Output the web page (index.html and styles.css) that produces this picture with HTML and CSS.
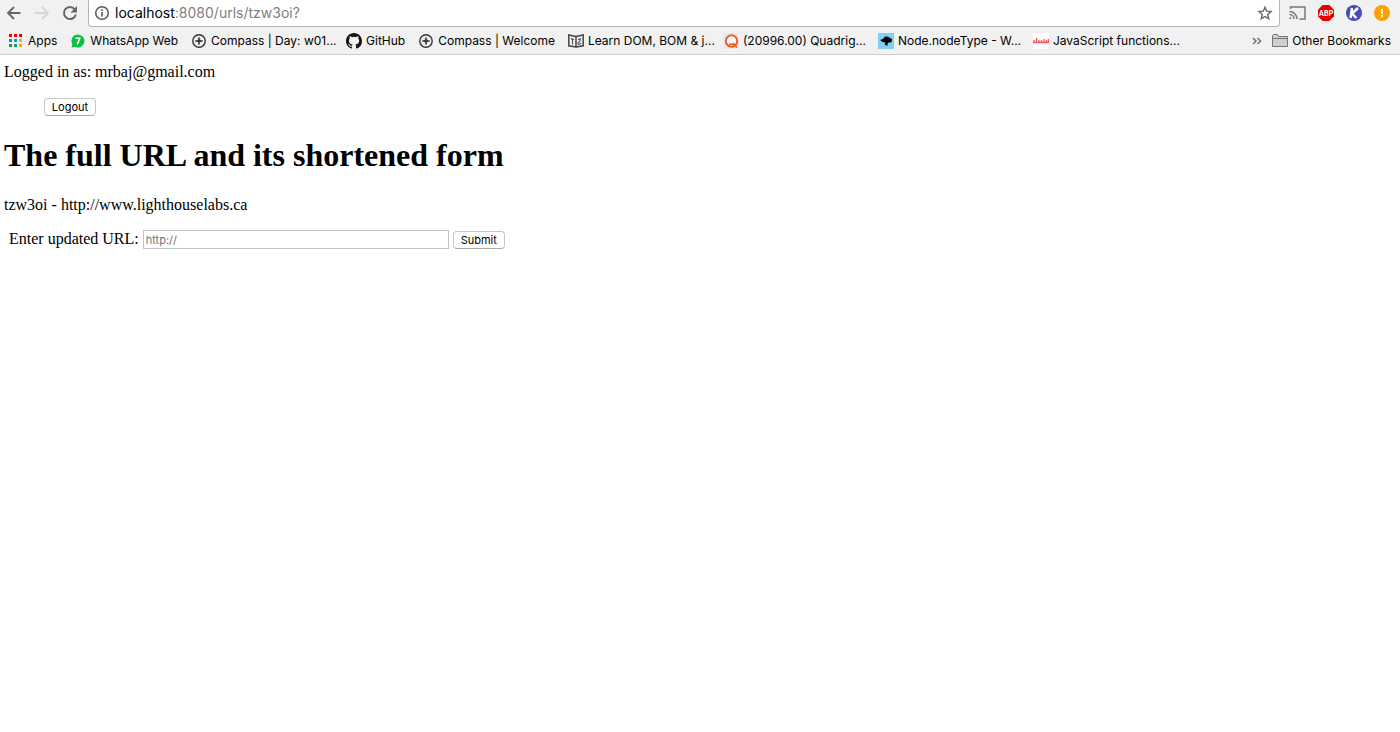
FILE: index.html
```
<!DOCTYPE html>
<html lang="en">
<head>
<meta charset="utf-8">
<title>TinyApp</title>
<link rel="stylesheet" href="styles.css">
</head>
<body>
<header class="browser">
  <div class="toolbar">
    <button class="tool" type="button" aria-label="Back"><svg width="16" height="16" viewBox="0 0 16 16" fill="none" stroke="#666" stroke-width="1.800"><path d="M14.500 8H2.500M8 2 2 8l6 6"/></svg></button>
    <button class="tool" type="button" aria-label="Forward"><svg width="16" height="16" viewBox="0 0 16 16" fill="none" stroke="#d6d6d6" stroke-width="1.800"><path d="M1 8h12.500M8 2l6 6-6 6"/></svg></button>
    <button class="tool" type="button" aria-label="Reload"><svg width="16" height="16" viewBox="0 0 16 16"><path d="M12.700 4.300A6 6 0 1 0 13.800 9.500" fill="none" stroke="#666" stroke-width="2"/><path d="M15 1v6.500H8.500z" fill="#666"/></svg></button>
    <div class="omnibox">
      <svg width="16" height="16" viewBox="0 0 16 16"><circle cx="8" cy="8" r="6.300" fill="none" stroke="#5a5a5a" stroke-width="1.500"/><path d="M7.200 7h1.600v4.500H7.200zM7.200 4.300h1.600v1.600H7.200z" fill="#5a5a5a"/></svg>
      <span class="address">localhost<span class="path">:8080/urls/tzw3oi?</span></span>
      <button class="tool" type="button" aria-label="Bookmark this page"><svg width="16" height="16" viewBox="0 0 16 16"><path d="m8 2.200 1.700 4 4.300.4-3.300 2.900 1 4.300L8 11.500l-3.700 2.300 1-4.300L2 6.600l4.300-.4z" fill="none" stroke="#666" stroke-width="1.400"/></svg></button>
    </div>
    <div class="extensions">
      <button class="tool" type="button" aria-label="Cast"><svg width="18" height="16" viewBox="-1 0 18 16" fill="none" stroke="#777" stroke-width="1.500"><path d="M1.500 4V2H16v12h-5.500M.5 6.500A7.500 7.500 0 0 1 8 14M.5 9.500A4.500 4.500 0 0 1 5 14"/><path d="M.5 12a2 2 0 0 1 2 2h-2z" fill="#777" stroke="none"/></svg></button>
      <button class="tool" type="button" aria-label="Adblock Plus"><svg width="16" height="16" viewBox="0 0 16 16"><path d="M4.700 0h6.600L16 4.700v6.600L11.300 16H4.700L0 11.300V4.700z" fill="#e50000"/><text x="8" y="11" class="abp">ABP</text></svg></button>
      <button class="tool" type="button" aria-label="K"><svg width="16" height="16" viewBox="0 0 16 16"><circle cx="8" cy="8" r="8" fill="#454cba"/><path d="M6 3 4.600 13M12 3 6 8.500 10.400 13" fill="none" stroke="#fff" stroke-width="2.500"/></svg></button>
      <button class="tool" type="button" aria-label="Update available"><svg width="16" height="16" viewBox="0 0 16 16"><circle cx="8" cy="8" r="8" fill="#ffa000"/><path d="M7 4h2v5H7zM7 10.300h2v2H7z" fill="#fff"/></svg></button>
    </div>
  </div>
  <nav class="bookmarks" aria-label="Bookmarks">
    <a class="bookmark" href="#"><svg width="16" height="16" viewBox="0 0 16 16"><path d="M1 1h3v3H1zM6 1h3v3H6zM11 1h3v3h-3z" fill="#f20000"/><path d="M1 6h3v3H1zM1 11h3v3H1zM6 11h3v3H6z" fill="#129d58"/><path d="M6 6h3v3H6z" fill="#1684ff"/><path d="M11 6h3v3h-3zM11 11h3v3h-3z" fill="#ffad00"/></svg><span>Apps</span></a>
    <a class="bookmark" href="#"><svg width="16" height="16" viewBox="0 0 16 16"><path d="M8 1.500a6.500 6.500 0 1 1-3 12.300L1.500 14.500l.8-3.300A6.500 6.500 0 0 1 8 1.500z" fill="#0bc143"/><path d="M5.500 5.300h4.200L7.300 11.300" fill="none" stroke="#fff" stroke-width="1.600"/></svg><span>WhatsApp Web</span></a>
    <a class="bookmark" href="#"><svg width="16" height="16" viewBox="0 0 16 16"><circle cx="8" cy="8" r="6.200" fill="none" stroke="#333" stroke-width="1.400"/><path d="m8 4 .9 3.100L12 8l-3.100.9L8 12l-.9-3.100L4 8l3.100-.9z" fill="#333" stroke="#333" stroke-width=".5"/></svg><span>Compass | Day: w01...</span></a>
    <a class="bookmark" href="#"><svg width="16" height="16" viewBox="0 0 16 16"><path fill="#181616" d="M8 0C3.580 0 0 3.580 0 8c0 3.540 2.290 6.530 5.470 7.590.4.070.55-.17.55-.38 0-.19-.01-.82-.01-1.490-2.010.37-2.530-.49-2.690-.94-.09-.23-.48-.94-.82-1.130-.28-.15-.68-.52-.01-.53.63-.01 1.080.58 1.230.82.72 1.210 1.870.87 2.330.66.070-.52.28-.87.51-1.070-1.780-.2-3.640-.89-3.640-3.950 0-.87.31-1.590.82-2.150-.08-.2-.36-1.020.08-2.120 0 0 .67-.21 2.200.82a7.600 7.600 0 0 1 4 0c1.530-1.040 2.200-.82 2.200-.82.44 1.100.16 1.920.08 2.120.51.56.82 1.270.82 2.150 0 3.070-1.870 3.750-3.650 3.950.29.25.54.73.54 1.480 0 1.070-.01 1.930-.01 2.200 0 .21.15.46.55.38A8 8 0 0 0 16 8c0-4.420-3.580-8-8-8z"/></svg><span>GitHub</span></a>
    <a class="bookmark" href="#"><svg width="16" height="16" viewBox="0 0 16 16"><circle cx="8" cy="8" r="6.200" fill="none" stroke="#333" stroke-width="1.400"/><path d="m8 4 .9 3.100L12 8l-3.100.9L8 12l-.9-3.100L4 8l3.100-.9z" fill="#333" stroke="#333" stroke-width=".5"/></svg><span>Compass | Welcome</span></a>
    <a class="bookmark" href="#"><svg width="16" height="16" viewBox="0 0 16 16" fill="none" stroke="#444" stroke-width="1.500"><path d="M.8 2 8 3.500 15.200 2v10.800L8 14 .8 12.800zM8 4v10"/><path d="M4.500 5.500v6M3 5l1.500 2L6 6M10 6.500l3-1M12 5.500v3l-2 1v2l3-1" stroke-width="1"/></svg><span>Learn DOM, BOM &amp; j...</span></a>
    <a class="bookmark" href="#"><svg width="16" height="16" viewBox="0 0 16 16"><path d="M0 0h16v16H0z" fill="#eaeaea"/><circle cx="8.500" cy="8" r="5.700" fill="#fff" stroke="#f35b20" stroke-width="2"/><path d="m10 10 4 4.500M6 11.300h4.500" stroke="#f35b20" stroke-width="1.500"/></svg><span>(20996.00) Quadrig...</span></a>
    <a class="bookmark" href="#"><svg width="16" height="16" viewBox="0 0 16 16"><path d="M0 0h16v16H0z" fill="#83d0f2"/><path d="m2 7 3-1 2-2.500 3 .2 4 2.300-.5 3.200-3.500.5-.8 3.300-2.400-1.500V9.300L4.500 9z" fill="#000"/></svg><span>Node.nodeType - W...</span></a>
    <a class="bookmark" href="#"><svg width="16" height="16" viewBox="0 0 16 16"><path d="M0 0h16v16H0z" fill="#fff"/><path d="M0 9.500h16M1 7v3M3.500 5v5M6 7v3M8.500 7v3M11 6v4M13.500 7v3M15.500 6v4" stroke="#f15757" stroke-width="1.400"/></svg><span>JavaScript functions...</span></a>
    <button class="tool more" type="button" aria-label="More bookmarks"><svg width="10" height="10" viewBox="0 0 10 10" fill="none" stroke="#707070" stroke-width="1.500"><path d="m1 2 3 3-3 3M5.500 2l3 3-3 3"/></svg></button>
    <a class="bookmark" href="#"><svg width="16" height="16" viewBox="0 0 16 16" fill="#cfcfcf" stroke="#777"><path d="M.5 13.500v-11l1-1h4l1 2h9v10zM.5 5.500h15"/></svg><span>Other Bookmarks</span></a>
  </nav>
</header>
<main class="page">
  <p class="login">Logged in as: mrbaj@gmail.com</p>
  <form class="logout"><button class="push" type="button">Logout</button></form>
  <h1 class="title">The full URL and its shortened form</h1>
  <p class="entry">tzw3oi - http://www.lighthouselabs.ca</p>
  <form class="update">
    <label for="long-url">Enter updated URL:</label>
    <input class="field" id="long-url" type="text" placeholder="http://">
    <button class="push" type="button">Submit</button>
  </form>
</main>
</body>
</html>
```
FILE: styles.css
```
* {
  box-sizing: border-box;
}

body {
  margin: 0;
  background: #fff;
  color: #000;
  font: 16px/18px "Liberation Serif", "Times New Roman", serif;
}

svg {
  display: block;
  flex: none;
}

.browser {
  background: #f1f1f1;
  border-bottom: 1px solid #cecece;
  font-family: Inter, sans-serif;
}

.toolbar {
  display: flex;
  align-items: center;
  gap: 12px;
  height: 27px;
  padding: 0 10px 0 6px;
}

.tool {
  padding: 0 0 1px;
  border: 0;
  background: none;
}

.omnibox {
  display: flex;
  flex: 1;
  align-items: center;
  gap: 5px;
  height: 27px;
  margin-left: -2px;
  padding: 0 6px 0 5px;
  background: #fff;
  border: 1px solid #b5b5b5;
  border-top: 0;
  border-radius: 0 0 4px 4px;
}

.address {
  flex: 1;
  font-size: 14px;
}

.path {
  color: #808080;
}

.extensions {
  display: flex;
  gap: 12px;
  margin-left: -4px;
}

.abp {
  fill: #fff;
  font: bold 7px Inter, sans-serif;
  text-anchor: middle;
}

.bookmarks {
  display: flex;
  align-items: center;
  gap: 13px;
  height: 27px;
  padding: 0 9px 0 8px;
}

.bookmark {
  display: flex;
  align-items: center;
  gap: 4px;
  max-width: 142px;
  color: #000;
  font-size: 12px;
  white-space: nowrap;
  text-decoration: none;
}

.more {
  margin-left: auto;
  margin-right: -3px;
  padding: 0;
}

.page {
  padding: 8px 4px;
}

.login,
.entry {
  margin: 0;
}

.logout {
  display: flex;
  margin: 17px 0 20px 40px;
}

.title {
  margin: 0 0 22px;
  font-size: 32px;
  line-height: 38px;
}

.update {
  display: flex;
  align-items: flex-start;
  gap: 4px;
  margin: 16px 0 0 5px;
}

.field {
  width: 306px;
  height: 19px;
  padding: 1px 2px;
  border: 1px solid #c4c4c4;
  font: 11px Inter, sans-serif;
}

.field::placeholder {
  color: #757575;
}

.push {
  align-self: center;
  width: 52px;
  height: 18px;
  padding: 0;
  background: #fff;
  border: 1px solid #c8c8c8;
  border-bottom-color: #aaa;
  border-radius: 4px;
  color: #000;
  font: 11px Inter, sans-serif;
}
```
